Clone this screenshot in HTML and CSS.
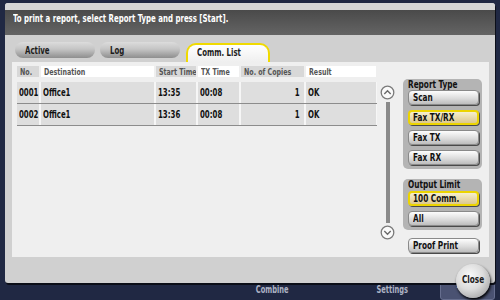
FILE: index.html
```html
<!DOCTYPE html>
<html>
<head>
 <meta charset="utf-8"/>
 <title>Job List - Comm. List</title>
<link rel="stylesheet" href="styles.css">
</head>
<body>
<div class="screen">

 <!-- screen that stays under the dialog -->
 <div class="underlay">
  <div></div>
  <div><span class="t mid">Combine</span></div>
  <div></div>
  <div><span class="t mid">Settings</span></div>
  <div class="ul-key"><span class="t mid">Apply</span></div>
 </div>

 <div class="dialog">
  <div class="dlg-strip"></div>
  <div class="dlg-head"><span class="t">To print a report, select Report Type and press [Start].</span></div>
  <div class="dlg-body">

   <div class="tabs">
    <div class="tab"><span class="t">Active</span></div>
    <div class="tab"><span class="t">Log</span></div>
    <div class="tab current"><span class="t">Comm. List</span></div>
   </div>

   <div class="panel">
    <div class="list">
     <div class="row head">
      <div><span class="t">No.</span></div>
      <div><span class="t">Destination</span></div>
      <div><span class="t">Start Time</span></div>
      <div><span class="t">TX Time</span></div>
      <div><span class="t">No. of Copies</span></div>
      <div><span class="t">Result</span></div>
     </div>
     <div class="row">
      <div><span class="t">0001</span></div>
      <div><span class="t">Office1</span></div>
      <div><span class="t">13:35</span></div>
      <div><span class="t">00:08</span></div>
      <div class="num"><span class="t end">1</span></div>
      <div><span class="t">OK</span></div>
     </div>
     <div class="row">
      <div><span class="t">0002</span></div>
      <div><span class="t">Office1</span></div>
      <div><span class="t">13:36</span></div>
      <div><span class="t">00:08</span></div>
      <div class="num"><span class="t end">1</span></div>
      <div><span class="t">OK</span></div>
     </div>
    </div>

    <div class="scroll">
     <span class="arrow"><svg width="15" height="15" viewBox="0 0 15 15"><circle cx="7.5" cy="7.5" r="6.3" class="ring"/><path d="M4.3 9 L7.5 5.8 L10.7 9" class="chev"/></svg></span>
     <span class="track"></span>
     <span class="arrow"><svg width="15" height="15" viewBox="0 0 15 15"><circle cx="7.5" cy="7.5" r="6.3" class="ring"/><path d="M4.3 6 L7.5 9.2 L10.7 6" class="chev"/></svg></span>
    </div>

    <div class="side">
     <div class="group">
      <p class="group-title"><span class="t">Report Type</span></p>
      <div class="btn"><span class="t">Scan</span></div>
      <div class="btn on"><span class="t">Fax TX/RX</span></div>
      <div class="btn"><span class="t">Fax TX</span></div>
      <div class="btn"><span class="t">Fax RX</span></div>
     </div>
     <div class="group second">
      <p class="group-title"><span class="t">Output Limit</span></p>
      <div class="btn on"><span class="t">100 Comm.</span></div>
      <div class="btn"><span class="t">All</span></div>
     </div>
     <div class="btn proof"><span class="t">Proof Print</span></div>
    </div>
   </div>

  </div>
 </div>

 <div class="close"><span class="t mid">Close</span></div>
</div>
</body>
</html>
```

FILE: styles.css
```css
body {
 margin: 0;
 background: #202843;
 font-family: "DejaVu Sans Condensed", "DejaVu Sans", sans-serif;
 font-stretch: condensed;
 font-weight: bold;
}
/* the panel font is a very narrow bold face: squeeze the glyphs */
.t {
 display: inline-block;
 white-space: nowrap;
 transform: scaleX(0.74);
 transform-origin: 0 50%;
}
.t.mid { transform-origin: 50% 50%; }
.t.end { transform-origin: 100% 50%; }

.screen {
 position: relative;
 width: 500px;
 height: 300px;
 overflow: hidden;
 display: flex;
 flex-direction: column;
 justify-content: flex-end;
}

/* the menu under the dialog */
.underlay {
 display: grid;
 grid-template-columns: 224px 96px 24px 96px 55px;
 height: 17px;
 padding-top: 3px;
 color: #aeb3c4;
 font-size: 10px;
 line-height: 14px;
 text-align: center;
}
.ul-key {
 background: #4a5272;
 border: 1px solid #666e8e;
 border-radius: 3px;
 margin-top: -6px;
 color: #d0d4e0;
}

/* dialog */
.dialog {
 position: absolute;
 left: 5px;
 top: 3px;
 width: 490px;
 height: 280px;
 display: flex;
 flex-direction: column;
 background: #d0d0d0;
 border-radius: 3px;
 box-shadow: 1px 2px 0 #0b0e18;
}
.dlg-strip {
 height: 7px;
 background: #d6d6d6;
 border-radius: 3px 3px 0 0;
}
.dlg-head {
 height: 25px;
 padding-left: 8px;
 background: linear-gradient(#4a4a4a, #646464);
 color: #fff;
 font-size: 10.5px;
 line-height: 16px;
}
.dlg-body {
 flex: 1;
 display: flex;
 flex-direction: column;
 padding: 7px 6px 26px 7px;
}

/* tabs */
.tabs {
 display: flex;
 align-items: flex-start;
 gap: 5px;
 height: 20px;
 padding-left: 3px;
}
.tab {
 box-sizing: border-box;
 width: 80px;
 height: 16px;
 padding-left: 10px;
 border-radius: 8px;
 background: linear-gradient(#dcdcdc, #c4c4c4 45%, #8e8e8e);
 color: #1c1c1c;
 font-size: 10.5px;
 line-height: 16px;
}
.tab.current {
 width: 84px;
 height: 19px;
 margin: 1px 0 0 1px;
 padding-left: 9px;
 border: 2px solid #f0da00;
 border-bottom: none;
 border-radius: 10px 10px 0 0;
 background: linear-gradient(#ffffff, #efefef);
 line-height: 14px;
}

/* list panel */
.panel {
 flex: 1;
 display: flex;
 align-items: flex-start;
 padding: 4px 7px 0 5px;
 background: #efefef;
}
.list {
 width: 360px;
}
.row {
 display: grid;
 grid-template-columns: 22px 113px 40px 41px 63px 70px;
 column-gap: 2px;
 height: 21px;
 border-bottom: 1px solid #8c8c8c;
 background: #f6f6f6;
 color: #111;
 font-size: 10.5px;
 line-height: 21px;
}
.row > div {
 padding-left: 2px;
 overflow: hidden;
 white-space: nowrap;
 background: #dedede;
}
.row > .num {
 padding: 0 4px 0 0;
 text-align: right;
}
.row.head {
 height: 11px;
 margin-bottom: 5px;
 border-bottom: none;
 background: none;
 color: #555;
 font-size: 9.5px;
 line-height: 11px;
}
.row.head > div { padding-left: 3px; }
.row.head > div:nth-child(odd) { background: #d8d8d8; }
.row.head > div:nth-child(even) { background: #ffffff; }

/* scroll bar */
.scroll {
 display: flex;
 flex-direction: column;
 align-items: center;
 width: 15px;
 height: 155px;
 margin: 19px 0 0 3px;
}
.arrow { height: 15px; }
.ring { fill: #fafafa; stroke: #7a7a7a; stroke-width: 1.3; }
.chev { fill: none; stroke: #6a6a6a; stroke-width: 1.4; }
.track {
 flex: 1;
 width: 4px;
 margin: 2px 0;
 background: #8a8a8a;
}

/* right column */
.side {
 width: 79px;
 margin: 13px 0 0 8px;
}
.group {
 display: flex;
 flex-direction: column;
 gap: 5px;
 padding: 0 3px 4px 5px;
 border-radius: 5px;
 background: #b4b4b4;
}
.group.second { margin-top: 10px; }
.group-title {
 margin: 0 0 -5px 0;
 height: 11px;
 color: #111;
 font-size: 11px;
 line-height: 11px;
}
.group.second .btn:first-of-type { margin-top: 1px; }
.btn {
 box-sizing: border-box;
 height: 15px;
 padding-left: 4px;
 border: 1px solid #8a8a8a;
 border-radius: 4px;
 background: linear-gradient(#fdfdfd, #dadada 60%, #bdbdbd);
 box-shadow: 1px 1px 0 #4a4a4a;
 color: #111;
 font-size: 11px;
 line-height: 13px;
}
.btn.on {
 padding-left: 3px;
 border: 2px solid #ecd400;
 background: linear-gradient(#f6efcf, #dcc88e);
 line-height: 11px;
}
.btn.proof {
 margin: 8px 3px 0 5px;
}

/* close key over the dialog corner */
.close {
 position: absolute;
 left: 456px;
 top: 264px;
 width: 34px;
 height: 34px;
 border-radius: 50%;
 background: radial-gradient(circle at 40% 35%, #fafafa, #dcdcdc 45%, #8e8e8e);
 box-shadow: 1px 2px 3px #000;
 color: #1a1a1a;
 font-size: 11px;
 line-height: 31px;
 text-align: center;
}
```
